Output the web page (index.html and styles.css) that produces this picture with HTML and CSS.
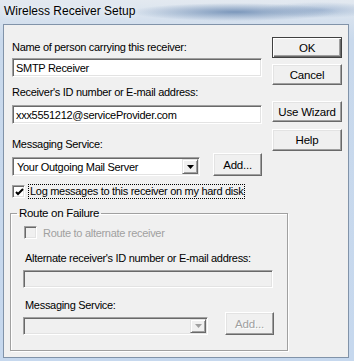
FILE: index.html
```html
<!DOCTYPE html>
<html lang="en">
<head>
  <meta charset="UTF-8" />
  <title>Wireless Receiver Setup</title>
  <link rel="stylesheet" href="styles.css">
</head>
<body>

<div class="window">
  <div class="titlebar">Wireless Receiver Setup</div>

  <div class="client">
    <div class="top">
      <div class="form">
        <div class="lbl lbl-first">Name of person carrying this receiver:</div>
        <div class="field">SMTP Receiver</div>

        <div class="lbl lbl-second">Receiver's ID number or E-mail address:</div>
        <div class="field field-second">xxx5551212@serviceProvider.com</div>

        <div class="lbl lbl-third">Messaging Service:</div>
        <div class="combo-row">
          <div class="combo">
            <span class="combo-text">Your Outgoing Mail Server</span>
            <span class="combo-btn">
              <svg width="7" height="4" viewBox="0 0 7 4"><path d="M0 0H7L3.5 4Z" fill="#000"/></svg>
            </span>
          </div>
          <button class="btn btn-add">Add...</button>
        </div>

        <div class="check-row">
          <span class="checkbox">
            <svg width="9" height="9" viewBox="0 0 9 9"><path d="M1 4 L3 6 L8 1" fill="none" stroke="#000" stroke-width="2"/></svg>
          </span>
          <span class="check-label focus">Log messages to this receiver on my hard disk</span>
        </div>
      </div>

      <div class="buttons">
        <button class="btn btn-default">OK</button>
        <button class="btn btn-cancel">Cancel</button>
        <button class="btn btn-wizard">Use Wizard</button>
        <button class="btn btn-help">Help</button>
      </div>
    </div>

    <fieldset class="group">
      <legend>Route on Failure</legend>
      <div class="check-row check-row-disabled">
        <span class="checkbox checkbox-disabled"></span>
        <span class="check-label">Route to alternate receiver</span>
      </div>

      <div class="lbl lbl-alt">Alternate receiver's ID number or E-mail address:</div>
      <div class="field field-disabled"></div>

      <div class="lbl lbl-alt-service">Messaging Service:</div>
      <div class="combo-row">
        <div class="combo combo-disabled">
          <span class="combo-text"></span>
          <span class="combo-btn">
            <svg width="7" height="4" viewBox="0 0 7 4"><path d="M0 0H7L3.5 4Z" fill="#a0a0a0"/></svg>
          </span>
        </div>
        <button class="btn btn-add btn-disabled">Add...</button>
      </div>
    </fieldset>
  </div>
</div>

</body>
</html>
```

FILE: styles.css
```css
:root {
  --face: #f0f0f0;
  --shadow: #a0a0a0;
  --dark: #696969;
  --light: #e3e3e3;
  --text: #000;
  --gray-text: #a0a0a0;
}
* {
  box-sizing: border-box;
}
body {
  margin: 0;
  font-family: "Liberation Sans", Arial, sans-serif;
  font-size: 11px;
  letter-spacing: -0.3px;
  line-height: 14px;
  color: var(--text);
}
.window {
  width: 354px;
  height: 361px;
  display: flex;
  flex-direction: column;
  background:
    radial-gradient(ellipse 105px 9px at 235px 12px, rgba(92, 126, 170, 0.75), rgba(92, 126, 170, 0)),
    radial-gradient(ellipse 60px 8px at 320px 10px, rgba(120, 150, 190, 0.5), rgba(120, 150, 190, 0)),
    linear-gradient(#e3e9f0, #c9d9ec 40px, #c6d8ee);
}
.titlebar {
  height: 24px;
  padding: 4px 0 0 4px;
  font-size: 12px;
  letter-spacing: 0;
  line-height: 14px;
  color: #000;
  text-shadow: 0 0 6px #fff;
}
.client {
  flex: 1;
  margin: 0 5px 3px 3px;
  background: var(--face);
  border: 1px solid #8193a9;
  padding: 12px 0 0 6px;
}
.top {
  display: flex;
  gap: 10px;
  padding-left: 2px;
}
.form {
  width: 250px;
  padding-top: 3px;
  display: flex;
  flex-direction: column;
}
.lbl {
  white-space: nowrap;
}
.lbl-second {
  margin-top: 8px;
}
.lbl-third {
  margin-top: 13px;
}
.field {
  height: 19px;
  margin-top: 4px;
  background: #fff;
  border: 1px solid;
  border-color: var(--shadow) #fff #fff var(--shadow);
  box-shadow: inset 1px 1px 0 var(--dark), inset -1px -1px 0 var(--light);
  padding: 2px 3px 0;
  white-space: nowrap;
  overflow: hidden;
}
.field-second {
  margin-top: 6px;
}
.combo-row {
  display: flex;
  align-items: flex-end;
  gap: 13px;
  margin-top: 2px;
}
.combo {
  width: 189px;
  height: 19px;
  display: flex;
  background: #fff;
  border: 1px solid;
  border-color: var(--shadow) #fff #fff var(--shadow);
  box-shadow: inset 1px 1px 0 var(--dark), inset -1px -1px 0 var(--light);
  padding: 1px;
}
.combo-text {
  flex: 1;
  padding: 1px 0 0 3px;
  white-space: nowrap;
  overflow: hidden;
}
.combo-btn {
  width: 16px;
  display: flex;
  align-items: center;
  justify-content: center;
  background: var(--face);
  border: 1px solid;
  border-color: var(--light) var(--dark) var(--dark) var(--light);
  box-shadow: inset 1px 1px 0 #fff, inset -1px -1px 0 var(--shadow);
}
.combo-disabled {
  width: 185px;
  background: var(--face);
}
.btn {
  font-family: inherit;
  font-size: 11.5px;
  letter-spacing: -0.2px;
  color: var(--text);
  height: 22px;
  padding: 0;
  background: var(--face);
  border: 1px solid;
  border-color: #fff var(--dark) var(--dark) #fff;
  box-shadow: inset -1px -1px 0 var(--shadow), inset 1px 1px 0 var(--light);
}
.btn-add {
  width: 49px;
  height: 23px;
}
.btn-disabled {
  color: var(--gray-text);
  text-shadow: 1px 1px 0 #fff;
}
.check-row {
  display: flex;
  align-items: center;
  gap: 3px;
  margin-top: 8px;
  height: 15px;
}
.checkbox {
  width: 13px;
  height: 13px;
  display: flex;
  align-items: center;
  justify-content: center;
  background: #fff;
  border: 1px solid;
  border-color: var(--shadow) #fff #fff var(--shadow);
  box-shadow: inset 1px 1px 0 var(--dark), inset -1px -1px 0 var(--light);
}
.checkbox svg {
  margin: 1px 0 0 1px;
}
.checkbox-disabled {
  background: var(--face);
}
.check-label {
  white-space: nowrap;
  padding: 0 1px;
}
.focus {
  border: 1px dotted #000;
  line-height: 13px;
}
.buttons {
  width: 70px;
  display: flex;
  flex-direction: column;
}
.btn-default {
  border: 1px solid #404040;
  box-shadow: inset 1px 1px 0 #fff, inset -1px -1px 0 var(--dark), inset -2px -2px 0 var(--shadow);
  height: 21px;
}
.btn-cancel {
  margin-top: 6px;
  height: 21px;
}
.btn-wizard {
  margin-top: 16px;
  height: 21px;
}
.btn-help {
  margin-top: 7px;
}
.group {
  width: 278px;
  margin: 7px 0 0;
  padding: 5px 12px 15px 12px;
  border: 1px solid var(--shadow);
  box-shadow: inset 1px 1px 0 #fff, 1px 1px 0 #fff;
}
.group legend {
  margin-left: -6px;
  padding: 0 2px;
  line-height: 14px;
  font-size: 11.5px;
}
.check-row-disabled {
  margin-top: 0;
  color: var(--gray-text);
  gap: 5px;
}
.check-row-disabled .checkbox {
  margin-left: 1px;
}
.lbl-alt {
  margin-top: 11px;
  padding-left: 2px;
}
.field-disabled {
  width: 250px;
  height: 18px;
  margin-top: 5px;
  background: var(--face);
}
.lbl-alt-service {
  margin-top: 10px;
  padding-left: 2px;
}
.group .combo-row {
  margin-top: 0;
  gap: 17px;
}
.group .combo {
  height: 18px;
}
.group .btn-add {
  height: 23px;
}
```
